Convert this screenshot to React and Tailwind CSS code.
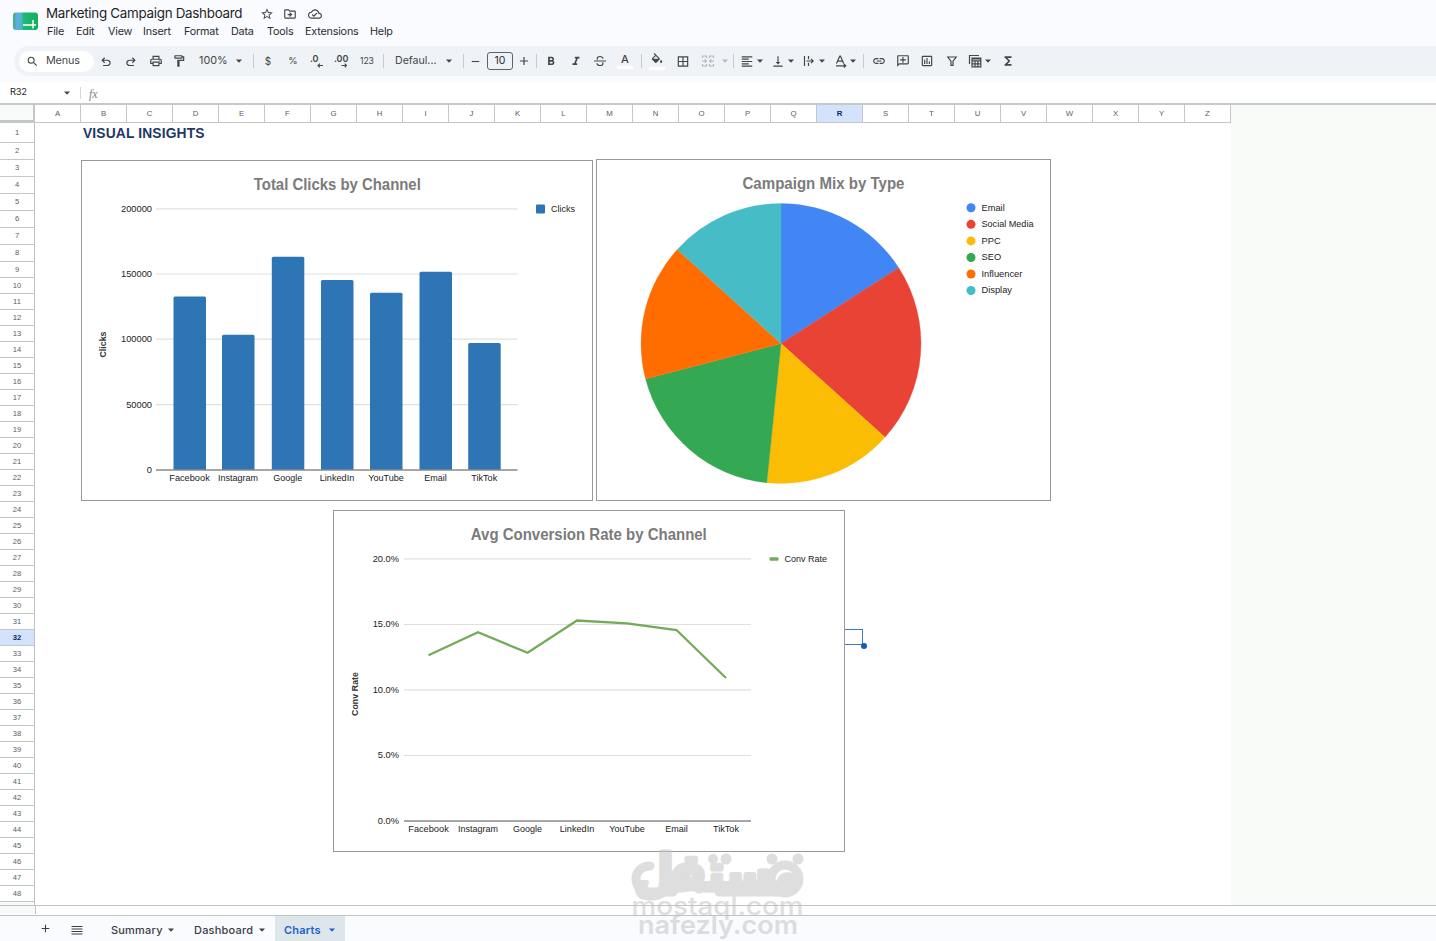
import {
  MdSearch, MdStarBorder, MdOutlineDriveFileMove, MdOutlineCloudDone, MdOutlinePrint, MdOutlineFormatPaint,
  MdFormatBold, MdFormatItalic, MdBorderAll, MdFormatAlignLeft, MdVerticalAlignBottom, MdLink,
  MdOutlineAddComment, MdOutlineInsertChart, MdFunctions, MdAdd, MdRemove,
} from 'react-icons/md'

const menus = [
  ['File', 'w-[29px]'], ['Edit', 'w-[32px]'], ['View', 'w-[35px]'], ['Insert', 'w-[41px]'], ['Format', 'w-[47px]'],
  ['Data', 'w-[36px]'], ['Tools', 'w-[38px]'], ['Extensions', 'w-[65px]'], ['Help', 'w-[30px]'],
]

const columns = 'ABCDEFGHIJKLMNOPQRSTUVWXYZ'.split('')
const rows = Array.from({ length: 48 }, (_, i) => i + 1)

const clicks = [
  { name: 'Facebook', x: 173.5, y: 296.5 },
  { name: 'Instagram', x: 222, y: 334.8 },
  { name: 'Google', x: 271.8, y: 256.8 },
  { name: 'LinkedIn', x: 321, y: 280 },
  { name: 'YouTube', x: 370, y: 292.8 },
  { name: 'Email', x: 419.5, y: 271.8 },
  { name: 'TikTok', x: 468.2, y: 343 },
]

const mix = [
  { name: 'Email', color: '#4285f4', from: 0, to: 57.2 },
  { name: 'Social Media', color: '#e94335', from: 57.2, to: 132 },
  { name: 'PPC', color: '#fbbc04', from: 132, to: 185.8 },
  { name: 'SEO', color: '#34a853', from: 185.8, to: 255.3 },
  { name: 'Influencer', color: '#ff6d01', from: 255.3, to: 312.2 },
  { name: 'Display', color: '#46bdc6', from: 312.2, to: 360 },
]

const rates = [
  { name: 'Facebook', x: 428.5, y: 655.3 },
  { name: 'Instagram', x: 478, y: 632.3 },
  { name: 'Google', x: 527.6, y: 652.8 },
  { name: 'LinkedIn', x: 577, y: 620.5 },
  { name: 'YouTube', x: 627, y: 623.3 },
  { name: 'Email', x: 676.5, y: 630 },
  { name: 'TikTok', x: 726, y: 678 },
]

const labelWidth = { Facebook: 40.5, Instagram: 40, Google: 29, LinkedIn: 34.5, YouTube: 35.5, Email: 22.5, TikTok: 26 }

function Caret({ className = '' }) {
  return (
    <svg viewBox="0 0 10 10" className={`w-2.5 h-2.5 shrink-0 ${className}`} fill="currentColor">
      <path d="M2 3.5h6L5 6.7z" />
    </svg>
  )
}

function Tool({ className = '', children }) {
  return <div className={`h-3.5 w-3.5 shrink-0 flex items-center justify-center text-[14px] ${className}`}>{children}</div>
}

function Divider({ className }) {
  return <div className={`w-px h-3.5 shrink-0 bg-[#c7cbd1] ${className}`} />
}

function Sym({ d, box = '0 -960 960 960' }) {
  return (
    <svg viewBox={box} className="w-3.5 h-3.5 shrink-0" fill="currentColor">
      <path d={d} />
    </svg>
  )
}

function Line({ d }) {
  return (
    <svg viewBox="0 0 14 14" className="w-3.5 h-3.5" fill="none" stroke="currentColor" strokeWidth="1.2">
      <path d={d} />
    </svg>
  )
}

function Header() {
  return (
    <div className="h-[46px] shrink-0 flex">
      <svg viewBox="0 0 26 20" className="w-[26px] h-5 ml-[13px] mt-[11px]">
        <defs>
          <linearGradient id="logo" x1="0" x2="1">
            <stop offset="0" stopColor="#34b070" />
            <stop offset=".14" stopColor="#5aaee0" />
            <stop offset=".34" stopColor="#4fb3c8" />
            <stop offset=".42" stopColor="#1fb978" />
            <stop offset="1" stopColor="#14ad5c" />
          </linearGradient>
        </defs>
        <rect x="0" y="1.500" width="25" height="17.500" rx="3" fill="url(#logo)" />
        <path d="M10 14h13M20 9v8.500" stroke="#fff" strokeWidth="1.400" fill="none" />
      </svg>
      <div className="ml-[7px] flex flex-col">
        <div className="h-[23px] mt-[2px] flex items-center text-[#444746]">
          <span className="w-[214px] text-[13.4px] leading-none tracking-[-0.29px] text-[#1f1f1f] whitespace-nowrap">Marketing Campaign Dashboard</span>
          <MdStarBorder size={14} />
          <MdOutlineDriveFileMove size={14} className="ml-[9px]" />
          <MdOutlineCloudDone size={14} className="ml-[11px]" />
        </div>
        <div className="flex mt-px pl-px text-[10.8px] leading-[12px] tracking-[-0.2px] text-[#2b2d2f] whitespace-nowrap">
          {menus.map(([m, w]) => <span key={m} className={w}>{m}</span>)}
        </div>
      </div>
    </div>
  )
}

function Toolbar() {
  return (
    <div className="h-[30px] shrink-0 ml-[14px] pl-[5px] flex items-center bg-[#eff2f7] rounded-l-[15px] text-[#444746]">
      <div className="w-[75px] h-[21px] shrink-0 rounded-full bg-white flex items-center pl-[7px]">
        <MdSearch size={13} className="shrink-0" />
        <span className="ml-[7px] text-[10.8px] tracking-[-0.15px]">Menus</span>
      </div>
      <Tool className="ml-[5px] pt-0.5"><Sym d="M280-200v-80h284q63 0 109.500-40T720-420q0-60-46.500-100T564-560H312l104 104-56 56-200-200 200-200 56 56-104 104h252q97 0 169.500 63T800-420q0 94-72.500 157T564-200H280Z" /></Tool>
      <Tool className="ml-[11px] pt-0.5"><Sym d="M396-200q-97 0-169.500-63T154-420q0-94 72.500-157T396-640h252L544-744l56-56 200 200-200 200-56-56 104-104H396q-63 0-109.500 40T240-420q0 60 46.500 100T396-280h284v80H396Z" /></Tool>
      <Tool className="ml-[11px]"><MdOutlinePrint /></Tool>
      <Tool className="ml-[9px]"><MdOutlineFormatPaint /></Tool>
      <span className="ml-[13px] w-[35px] text-[10.8px] shrink-0">100%</span>
      <Caret />
      <Divider className="ml-[9px]" />
      <Tool className="ml-[7px]"><span className="text-[10px]">$</span></Tool>
      <Tool className="ml-[11px]"><span className="text-[9.5px]">%</span></Tool>
      <Tool className="ml-[10px]">
        <svg viewBox="0 0 14 14" className="w-3.5 h-3.5 overflow-visible" fill="none" stroke="currentColor">
          <text x="0" y="8" fontSize="9" fontWeight="600" fill="currentColor" stroke="none">.0</text>
          <path d="M13 11.500H8M9.800 9.700L8 11.500l1.800 1.800" strokeWidth="1.100" />
        </svg>
      </Tool>
      <Tool className="ml-[11px]">
        <svg viewBox="0 0 14 14" className="w-3.5 h-3.5 overflow-visible" fill="none" stroke="currentColor">
          <text x="-1" y="8" fontSize="9" fontWeight="600" fill="currentColor" stroke="none">.00</text>
          <path d="M6.500 11.500h5M9.700 9.700l1.800 1.800-1.800 1.800" strokeWidth="1.100" />
        </svg>
      </Tool>
      <span className="ml-[11px] w-[18px] text-[8.600px] tracking-[-0.1px] shrink-0">123</span>
      <Divider className="ml-[5px]" />
      <span className="ml-[11px] w-[49px] text-[10.600px] shrink-0">Defaul...</span>
      <Caret />
      <Divider className="ml-[9px]" />
      <Tool className="ml-[4px]"><MdRemove size={13} /></Tool>
      <div className="ml-[5px] w-[26px] h-[18px] shrink-0 border border-[#5f6368] rounded-[3px] flex items-center justify-center text-[10.500px] text-[#2b2d2f]">10</div>
      <Tool className="ml-[4px]"><MdAdd size={14} /></Tool>
      <Divider className="ml-[5px]" />
      <Tool className="ml-[7px]"><MdFormatBold size={15} /></Tool>
      <Tool className="ml-[11px]"><MdFormatItalic size={15} /></Tool>
      <Tool className="ml-[10px]">
        <Line d="M1 7h12M10 4.600C9.700 3.200 8.500 2.500 7 2.500S4.200 3.300 4.200 4.600c0 .4.100.7.300 1M4 9.300c.3 1.500 1.500 2.200 3 2.200s2.900-.8 2.900-2.100c0-.4-.1-.7-.3-1" />
      </Tool>
      <Tool className="ml-[11px] flex-col">
        <span className="text-[11px] leading-[13px] font-medium">A</span>
        <span className="w-4 h-[3px] shrink-0 bg-white" />
      </Tool>
      <Divider className="ml-[9px]" />
      <Tool className="ml-[8px] flex-col">
        <Sym box="0 0 24 24" d="M16.560 8.940L7.620 0 6.210 1.410l2.380 2.380-5.150 5.150c-.59.59-.59 1.540 0 2.120l5.500 5.500c.29.29.68.44 1.060.44s.77-.15 1.060-.44l5.500-5.500c.59-.58.59-1.530 0-2.120zM5.210 10L10 5.210 14.790 10H5.210zM19 11.500s-2 2.170-2 3.500c0 1.100.9 2 2 2s2-.9 2-2c0-1.330-2-3.500-2-3.500z" />
        <span className="w-4 h-[3px] shrink-0 bg-white" />
      </Tool>
      <Tool className="ml-[12px]"><MdBorderAll size={15} /></Tool>
      <Tool className="ml-[11px] text-[#b4b8bd]">
        <Line d="M1.500 4V2h4v2M8.500 4V2h4v2M1.500 10v2h4v-2M8.500 10v2h4v-2M1 7h4M3.700 5.400L5.300 7 3.700 8.600M13 7H9M10.300 5.400L8.700 7l1.600 1.600" />
      </Tool>
      <Caret className="ml-[5px] text-[#b4b8bd]" />
      <Divider className="ml-[3px]" />
      <Tool className="ml-[6px]"><MdFormatAlignLeft size={15} /></Tool>
      <Caret className="ml-px" />
      <Tool className="ml-[6px]"><MdVerticalAlignBottom size={15} /></Tool>
      <Caret className="ml-px" />
      <Tool className="ml-[6px]">
        <Line d="M2.500 2v10M6.500 2v3.200M6.500 8.800V12M4.500 7h6.500M9 4.800L11.200 7 9 9.200" />
      </Tool>
      <Caret className="ml-px" />
      <Tool className="ml-[7px]">
        <Line d="M2.500 9.500L5.800 2h.6l3.300 7.500M3.700 7.200h4.800M2 11.800h9.500M9.800 10l1.900 1.800-1.900 1.700" />
      </Tool>
      <Caret />
      <Divider className="ml-[5px]" />
      <Tool className="ml-[8px]"><MdLink /></Tool>
      <Tool className="ml-[10px]"><MdOutlineAddComment className="-scale-x-100" /></Tool>
      <Tool className="ml-[10px]"><MdOutlineInsertChart /></Tool>
      <Tool className="ml-[11px]">
        <Line d="M2.800 3h8.400L8 7.200V11.500H6V7.200z" />
      </Tool>
      <Tool className="ml-[9px]">
        <Line d="M1.500 10V1.500H11M4 4h8.800v8.800H4zM4 6.800h8.800M4 9.800h8.800M7 6.800v6M9.900 6.800v6M4 5h8.800" />
      </Tool>
      <Caret className="ml-px" />
      <Tool className="ml-[8px]"><MdFunctions /></Tool>
    </div>
  )
}

function FormulaBar() {
  return (
    <div className="h-[21px] shrink-0 flex items-center bg-white">
      <span className="w-[52px] ml-[10px] text-[9.400px] tracking-[-0.3px] text-[#1f1f1f] mb-px">R32</span>
      <Caret className="text-[#444746]" />
      <div className="w-px h-3 ml-[8px] bg-[#d5d7da]" />
      <span className="ml-[8px] mt-0.5 text-[12px] leading-none italic font-['Liberation_Serif',serif] text-[#7d8185]">fx</span>
    </div>
  )
}

function rowHeight(n) {
  if (n === 1) return 'h-5'
  return n < 9 ? 'h-[17px]' : 'h-4'
}

function RowHeaders() {
  return (
    <div className="w-[35px] shrink-0 border-r border-[#c0c3c4] flex flex-col overflow-hidden text-[7.600px] text-[#5a5d60]">
      {rows.map(n => (
        <div
          key={n}
          className={`shrink-0 border-b border-[#c4c7c5] flex items-center justify-center ${rowHeight(n)} ${n === 32 ? 'bg-[#d3e3fd] text-[#0b2a5c] font-bold' : ''}`}
        >
          {n}
        </div>
      ))}
      <div className="flex-1 bg-[#f8fafa]" />
    </div>
  )
}

function ColumnHeaders() {
  return (
    <div className="h-[18px] shrink-0 flex text-[7.800px] text-[#5a5d60]">
      <div className="w-[35px] shrink-0 bg-[#f8fafa] border-r-2 border-b-[3px] border-[#c4c6c7]" />
      {columns.map(c => (
        <div
          key={c}
          className={`w-[46px] shrink-0 border-r border-b border-[#c4c7c5] flex items-center justify-center ${c === 'R' ? 'bg-[#d3e3fd] text-[#0b2a5c] font-bold' : 'bg-white'}`}
        >
          {c}
        </div>
      ))}
    </div>
  )
}

// every chart draws in window coordinates, the viewBox picks its own part
function ChartFrame({ className, box, children }) {
  return (
    <svg viewBox={box} className={`absolute bg-white font-['Liberation_Sans',Arial,sans-serif] ${className}`}>
      {children}
    </svg>
  )
}

function ChartText({ x, y, w, anchor = 'middle', children }) {
  return (
    <text x={x} y={y} textAnchor={anchor} fontSize="9.3" fill="#222" textLength={w} lengthAdjust="spacingAndGlyphs">
      {children}
    </text>
  )
}

function ChartTitle({ x, y, w, children }) {
  return (
    <text x={x} y={y} fontSize="15.6" fontWeight="700" fill="#7b7b7b" textAnchor="middle" textLength={w} lengthAdjust="spacingAndGlyphs">
      {children}
    </text>
  )
}

function ClicksChart() {
  const ticks = [['200000', 208.8], ['150000', 274], ['100000', 339.2], ['50000', 404.6], ['0', 469.8]]
  return (
    <ChartFrame box="81 160 512 341" className="left-[46px] top-[37px] w-[512px] h-[341px]">
      <rect x="81.5" y="160.5" width="511" height="340" fill="#fff" stroke="#999" />
      <ChartTitle x={337.3} y={190} w={167}>Total Clicks by Channel</ChartTitle>
      {ticks.map(([t, y]) => (
        <g key={t}>
          <ChartText x={152} y={y + 2.9} anchor="end">{t}</ChartText>
          {t !== '0' && <path d={`M156 ${y}H517.5`} stroke="#e0e0e0" strokeWidth="1.2" />}
        </g>
      ))}
      {clicks.map(c => (
        <g key={c.name}>
          <path d={`M${c.x} 470V${c.y + 1.5}q0-1.5 1.5-1.5h29.5q1.5 0 1.5 1.5V470z`} fill="#2e75b6" />
          <ChartText x={c.x + 16} y={481} w={labelWidth[c.name]}>{c.name}</ChartText>
        </g>
      ))}
      <path d="M156 470H517.5" stroke="#8a8a8a" strokeWidth="1.3" />
      <text transform="translate(106 344.5) rotate(-90)" fontSize="8.8" fontWeight="700" textAnchor="middle" textLength="26" fill="#333">Clicks</text>
      <rect x="536" y="204.5" width="9" height="9" rx="1" fill="#2e75b6" />
      <ChartText x={551} y={212} w={24} anchor="start">Clicks</ChartText>
    </ChartFrame>
  )
}

function slice(from, to, cx = 781, cy = 343.5, r = 140) {
  const pt = a => {
    const t = (a * Math.PI) / 180
    return `${cx + r * Math.sin(t)} ${cy - r * Math.cos(t)}`
  }
  return `M${cx} ${cy}L${pt(from)}A${r} ${r} 0 0 1 ${pt(to)}z`
}

function MixChart() {
  return (
    <ChartFrame box="596 159 455 342" className="left-[561px] top-[36px] w-[455px] h-[342px]">
      <rect x="596.5" y="159.5" width="454" height="341" fill="#fff" stroke="#999" />
      <ChartTitle x={823.5} y={189} w={162}>Campaign Mix by Type</ChartTitle>
      {mix.map((m, i) => (
        <g key={m.name}>
          <path d={slice(m.from, m.to)} fill={m.color} stroke={m.color} strokeWidth=".3" />
          <circle cx="971" cy={207.8 + i * 16.55} r="4.5" fill={m.color} />
          <ChartText x={981.5} y={210.8 + i * 16.5} w={m.name === 'Social Media' ? 52 : undefined} anchor="start">{m.name}</ChartText>
        </g>
      ))}
    </ChartFrame>
  )
}

function RateChart() {
  const ticks = [['20.0%', 558.8], ['15.0%', 624.5], ['10.0%', 689.8], ['5.0%', 755.5], ['0.0%', 821]]
  return (
    <ChartFrame box="333 510 512 342" className="left-[298px] top-[387px] w-[512px] h-[342px]">
      <rect x="333.5" y="510.5" width="511" height="341" fill="#fff" stroke="#999" />
      <ChartTitle x={588.8} y={540} w={236}>Avg Conversion Rate by Channel</ChartTitle>
      {ticks.map(([t, y]) => (
        <g key={t}>
          <ChartText x={399} y={y + 2.9} anchor="end">{t}</ChartText>
          {t !== '0.0%' && <path d={`M404 ${y}H751`} stroke="#e0e0e0" strokeWidth="1.2" />}
        </g>
      ))}
      <path d="M404 821H751" stroke="#8a8a8a" strokeWidth="1.3" />
      <polyline points={rates.map(r => `${r.x},${r.y}`).join(' ')} fill="none" stroke="#74ab58" strokeWidth="2.3" />
      {rates.map(r => (
        <ChartText key={r.name} x={r.x} y={832} w={labelWidth[r.name]}>{r.name}</ChartText>
      ))}
      <text transform="translate(358 694) rotate(-90)" fontSize="8.8" fontWeight="700" textAnchor="middle" textLength="44" fill="#333">Conv Rate</text>
      <rect x="769.5" y="557.3" width="9" height="3.4" rx="1" fill="#74ab58" />
      <ChartText x={784.5} y={562} w={42.5} anchor="start">Conv Rate</ChartText>
    </ChartFrame>
  )
}

function Sheet() {
  return (
    <div className="flex-1 min-w-0 flex relative">
      <div className="w-[1196px] shrink-0 bg-white pl-[48px] pt-[3px]">
        <h1 className="font-['Liberation_Sans',Arial,sans-serif] font-bold text-[13.8px] leading-[15px] tracking-[0.15px] text-[#1f3864]">VISUAL INSIGHTS</h1>
      </div>
      <div className="flex-1 bg-[#f7faf7]" />
      {/* active cell, partly under the line chart */}
      <div className="absolute left-[781px] top-[506px] w-[47px] h-[16px] border border-[#3b78cf]">
        <span className="absolute -right-[5px] -bottom-[5px] w-[6px] h-[6px] rounded-full bg-[#185abc]" />
      </div>
      <ClicksChart />
      <MixChart />
      <RateChart />
    </div>
  )
}

function TabBar() {
  return (
    <div className="h-[26px] shrink-0 border-t border-[#c0c3c4] bg-[#f9fbff] flex items-center text-[#3c4043] text-[11px] font-medium tracking-[0.2px]">
      <MdAdd size={13} className="ml-[39px]" />
      <svg viewBox="0 0 12 10" className="w-3 h-2.5 ml-[19px] mt-0.5" stroke="currentColor" strokeWidth="1.2">
        <path d="M.5 1.5h11M.5 4h11M.5 6.500h11M.5 9h11" />
      </svg>
      <span className="ml-[28px] w-[55px] mt-[3px]">Summary</span>
      <Caret className="mt-[3px]" />
      <span className="ml-[18px] w-[63px] mt-[3px]">Dashboard</span>
      <Caret className="mt-[3px]" />
      <div className="ml-[8px] w-[70px] h-full bg-[#dde6ea] flex items-center text-[#1b61cc] font-semibold">
        <span className="ml-[9px] w-[43px] mt-[3px]">Charts</span>
        <Caret className="mt-[3px]" />
      </div>
    </div>
  )
}

function Watermark() {
  return (
    <svg viewBox="618 830 200 111" className="absolute left-[618px] top-[830px] w-[200px] h-[111px] overflow-visible pointer-events-none" fill="#c4c4c4" opacity=".55">
      <text x="717.5" y="890" direction="rtl" textAnchor="middle" fontSize="50" fontWeight="700" stroke="#c4c4c4" strokeWidth="5" strokeLinejoin="round" textLength="167" lengthAdjust="spacingAndGlyphs" fontFamily="DejaVu Sans">مستقل</text>
      <g>
        <circle cx="713" cy="859" r="5" />
        <circle cx="726" cy="859" r="5.500" />
        <circle cx="772" cy="859" r="5.500" />
        <circle cx="798" cy="859" r="5.500" />
      </g>
      <g fill="none" stroke="#c4c4c4" strokeWidth="9" strokeLinecap="round">
        <path d="M650 866c-9 0-14 6-14 13s5 13 13 13h24" />
        <path d="M673 889c0-13 4-22 13-22s13 8 13 22M719 892h62" />
        <circle cx="785" cy="879" r="14" />
      </g>
      <text x="717.5" y="914.5" textAnchor="middle" fontSize="25" fontWeight="500" textLength="172" lengthAdjust="spacingAndGlyphs" fontFamily="Inter">mostaql.com</text>
      <text x="718" y="933.500" textAnchor="middle" fontSize="25" fontWeight="600" textLength="160" lengthAdjust="spacingAndGlyphs" fontFamily="Inter">nafezly.com</text>
    </svg>
  )
}

export default function App() {
  return (
    <div className="relative w-[1436px] h-[941px] overflow-hidden flex flex-col bg-[#f9fbff] font-['Inter',sans-serif]">
      <Header />
      <Toolbar />
      <div className="h-[6px] shrink-0" />
      <FormulaBar />
      <div className="h-[2px] shrink-0 bg-[#c7c8c8]" />
      <div className="flex-1 min-h-0 flex flex-col bg-[#f7faf7] font-['Liberation_Sans',Arial,sans-serif]">
        <ColumnHeaders />
        <div className="flex-1 min-h-0 flex bg-white">
          <RowHeaders />
          <Sheet />
        </div>
      </div>
      <div className="h-[10px] shrink-0 border-t border-[#c0c3c4] bg-white flex">
        <div className="w-[36px] h-2 border-r border-[#c0c3c4] bg-[#f8fafa]" />
      </div>
      <TabBar />
      <Watermark />
    </div>
  )
}
